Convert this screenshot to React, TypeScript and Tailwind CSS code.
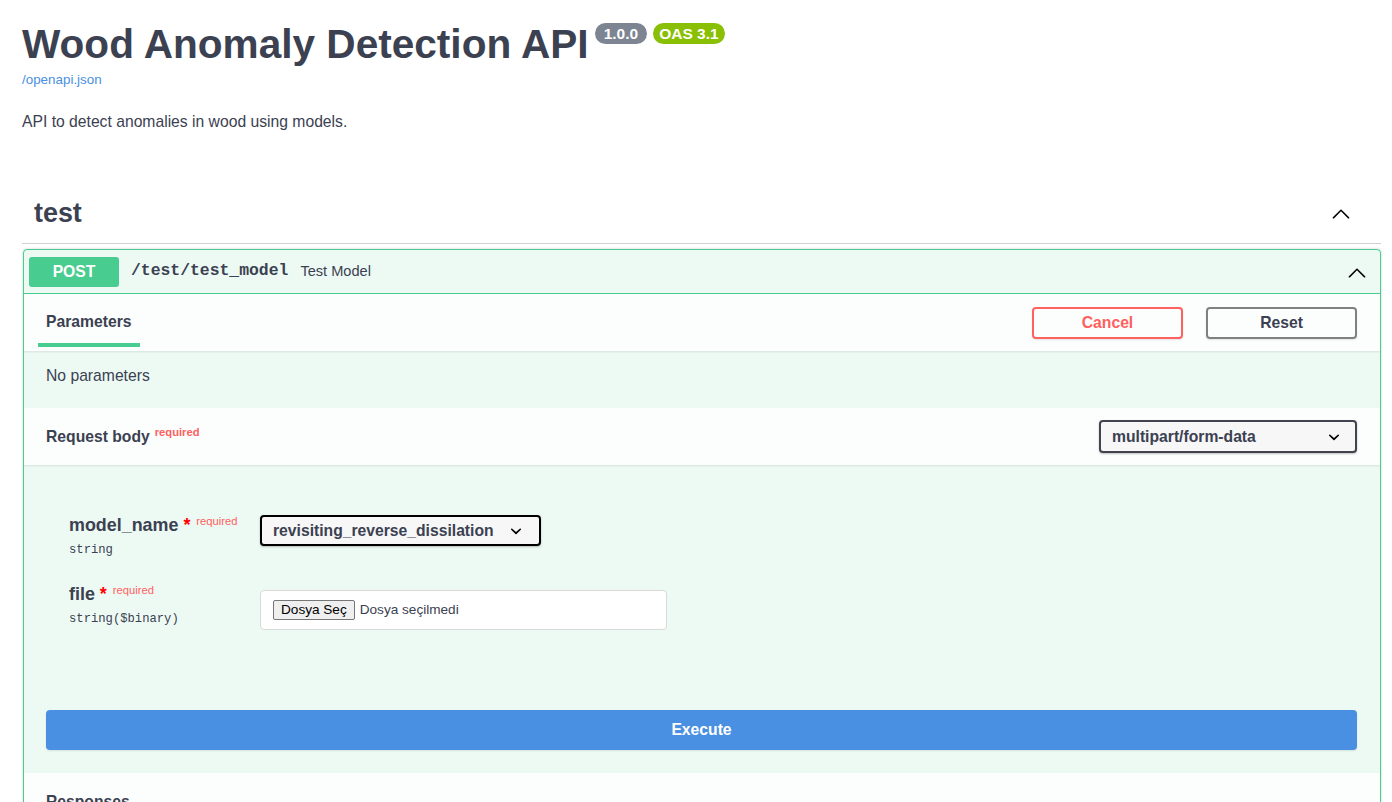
import React from "react";

// swagger-ui style chevrons
function ChevronUp({ className }: { className?: string }) {
  return (
    <svg viewBox="0 0 20 20" className={className} fill="currentColor" aria-hidden>
      <path d="M17.418 14.908c-.272.27-.71.27-.98 0L10 8.518l-6.438 6.39c-.27.27-.708.27-.98 0-.27-.27-.27-.7 0-.97l6.93-6.876c.27-.27.708-.27.98 0l6.928 6.875c.27.27.27.7-.002.97z" />
    </svg>
  );
}

function SelectArrow({ className }: { className?: string }) {
  return (
    <svg viewBox="0 0 20 20" className={className} fill="currentColor" aria-hidden>
      <path d="M13.418 7.859a.695.695 0 01.978 0 .68.68 0 010 .969l-3.908 3.83a.697.697 0 01-.979 0l-3.908-3.83a.68.68 0 010-.969.695.695 0 01.978 0L10 11z" />
    </svg>
  );
}

function FieldName({ name, type }: { name: string; type: string }) {
  return (
    <div className="w-[191px] shrink-0">
      <div className="flex items-start leading-[20px]">
        <span className="text-[17.9px] font-bold">{name}</span>
        <span className="ml-[5px] text-[17.9px] font-bold text-[#ff0000]">*</span>
        <span className="ml-[6px] -mt-[1px] text-[11.2px] leading-[14px] text-[#ff6060]">
          required
        </span>
      </div>
      <div className="mt-[7px] font-['Liberation_Mono',monospace] text-[12.2px] leading-[16px] text-[#3b4151]">
        {type}
      </div>
    </div>
  );
}

export default function App() {
  return (
    <div className="min-h-screen bg-white font-['Liberation_Sans',Arial,sans-serif] text-[#3b4151]">
      <div className="ml-[22px] w-[1359px] pt-[21px]">
        {/* info */}
        <div className="flex items-start">
          <h2 className="text-[40.6px] font-bold leading-[46px]">
            Wood Anomaly Detection API
          </h2>
          <span className="ml-[6px] mt-[2px] flex h-[21px] items-center rounded-full bg-[#7d8492] px-[9px] text-[15.5px] font-bold text-white">
            1.0.0
          </span>
          <span className="ml-[6px] mt-[2px] flex h-[21px] items-center rounded-full bg-[#89bf04] px-[6px] text-[15.5px] font-bold text-white">
            OAS 3.1
          </span>
        </div>
        <a className="mt-[5px] block text-[13.4px] leading-[16px] text-[#4990e2]">
          /openapi.json
        </a>
        <p className="mt-[25px] text-[15.7px] leading-[18px]">
          API to detect anomalies in wood using models.
        </p>

        {/* tag */}
        <div className="mt-[52px] flex h-[61px] items-center border-b border-[#cfd1d5] pl-[12px] pr-[29px]">
          <h3 className="flex-1 text-[26.9px] font-bold">test</h3>
          <ChevronUp className="h-[22px] w-[22px] text-black" />
        </div>

        {/* operation */}
        <div className="ml-px mt-[5px] overflow-hidden rounded-[4px] border border-[#49cc90] bg-[#edfaf4] shadow-[0_0_3px_rgba(0,0,0,0.19)]">
          <div className="flex h-[44px] items-center border-b border-[#49cc90] pl-[5px] pr-[12px]">
            <span className="flex h-[30px] w-[90px] items-center justify-center rounded-[3px] bg-[#49cc90] text-[15.7px] font-bold text-white">
              POST
            </span>
            <span className="ml-[12px] font-['Liberation_Mono',monospace] text-[16.4px] font-bold">
              /test/test_model
            </span>
            <span className="ml-[12px] flex-1 text-[14.6px]">Test Model</span>
            <ChevronUp className="h-[22px] w-[22px] text-black" />
          </div>

          {/* parameters header */}
          <div className="flex h-[57px] items-center bg-[#fbfefd] pl-[14px] pr-[23px] shadow-[0_1px_2px_rgba(0,0,0,0.1)]">
            <div className="flex h-full flex-col pt-[19px]">
              <span className="px-[8px] text-[15.7px] font-bold leading-[18px]">Parameters</span>
              <span className="mt-[12px] h-[4px] w-[102px] bg-[#49cc90]" />
            </div>
            <div className="flex-1" />
            <button className="h-[32px] w-[151px] rounded-[4px] border-2 border-[#ff6060] text-[15.7px] font-bold text-[#ff6060] shadow-[0_1px_2px_rgba(0,0,0,0.1)]">
              Cancel
            </button>
            <button className="ml-[23px] h-[32px] w-[151px] rounded-[4px] border-2 border-[#808080] text-[15.7px] font-bold text-[#3b4151] shadow-[0_1px_2px_rgba(0,0,0,0.1)]">
              Reset
            </button>
          </div>
          <div className="h-[57px] px-[22px] pt-[16px] text-[15.7px] leading-[18px]">
            No parameters
          </div>

          {/* request body header */}
          <div className="flex h-[57px] items-center bg-[#fbfefd] pl-[22px] pr-[23px] shadow-[0_1px_2px_rgba(0,0,0,0.1)]">
            <span className="text-[15.7px] font-bold">Request body</span>
            <span className="ml-[5px] -mt-[8px] flex-1 text-[11.2px] font-bold text-[#ff6060]">
              required
            </span>
            <div className="flex h-[33px] w-[258px] items-center rounded-[4px] border-2 border-[#41444e] bg-[#f7f7f7] pl-[11px] pr-[10px] shadow-[0_1px_2px_rgba(0,0,0,0.25)]">
              <span className="flex-1 text-[15.7px] font-bold">multipart/form-data</span>
              <SelectArrow className="h-[22px] w-[22px] text-black" />
            </div>
          </div>

          {/* request body */}
          <div className="px-[22px] pb-[23px] pt-[50px]">
            <div className="flex h-[69px] items-start pl-[23px]">
              <FieldName name="model_name" type="string" />
              <div className="flex h-[31px] w-[281px] items-center rounded-[4px] border-2 border-black bg-[#f7f7f7] pl-[11px] pr-[12px] shadow-[0_1px_2px_rgba(0,0,0,0.25)]">
                <span className="flex-1 text-[15.7px] font-bold">
                  revisiting_reverse_dissilation
                </span>
                <SelectArrow className="h-[22px] w-[22px] text-black" />
              </div>
            </div>
            <div className="flex items-start pl-[23px]">
              <FieldName name="file" type="string($binary)" />
              <div className="mt-[6px] flex h-[40px] w-[407px] items-center rounded-[4px] border border-[#d9d9d9] bg-white pl-[12px]">
                <span className="flex h-[20px] items-center rounded-[2px] border border-[#767676] bg-[#efefef] px-[7px] text-[13.6px] text-black">
                  Dosya Seç
                </span>
                <span className="ml-[5px] text-[13.6px] text-[#3b4151]">Dosya seçilmedi</span>
              </div>
            </div>
            <button className="mt-[80px] flex h-[40px] w-[1311px] items-center justify-center rounded-[4px] bg-[#4990e2] text-[15.7px] font-bold text-white shadow-[0_1px_2px_rgba(0,0,0,0.1)]">
              Execute
            </button>
          </div>

          {/* responses header */}
          <div className="flex h-[57px] items-center bg-[#fbfefd] px-[22px] shadow-[0_1px_2px_rgba(0,0,0,0.1)]">
            <span className="text-[15.7px] font-bold">Responses</span>
          </div>
        </div>
      </div>
    </div>
  );
}
